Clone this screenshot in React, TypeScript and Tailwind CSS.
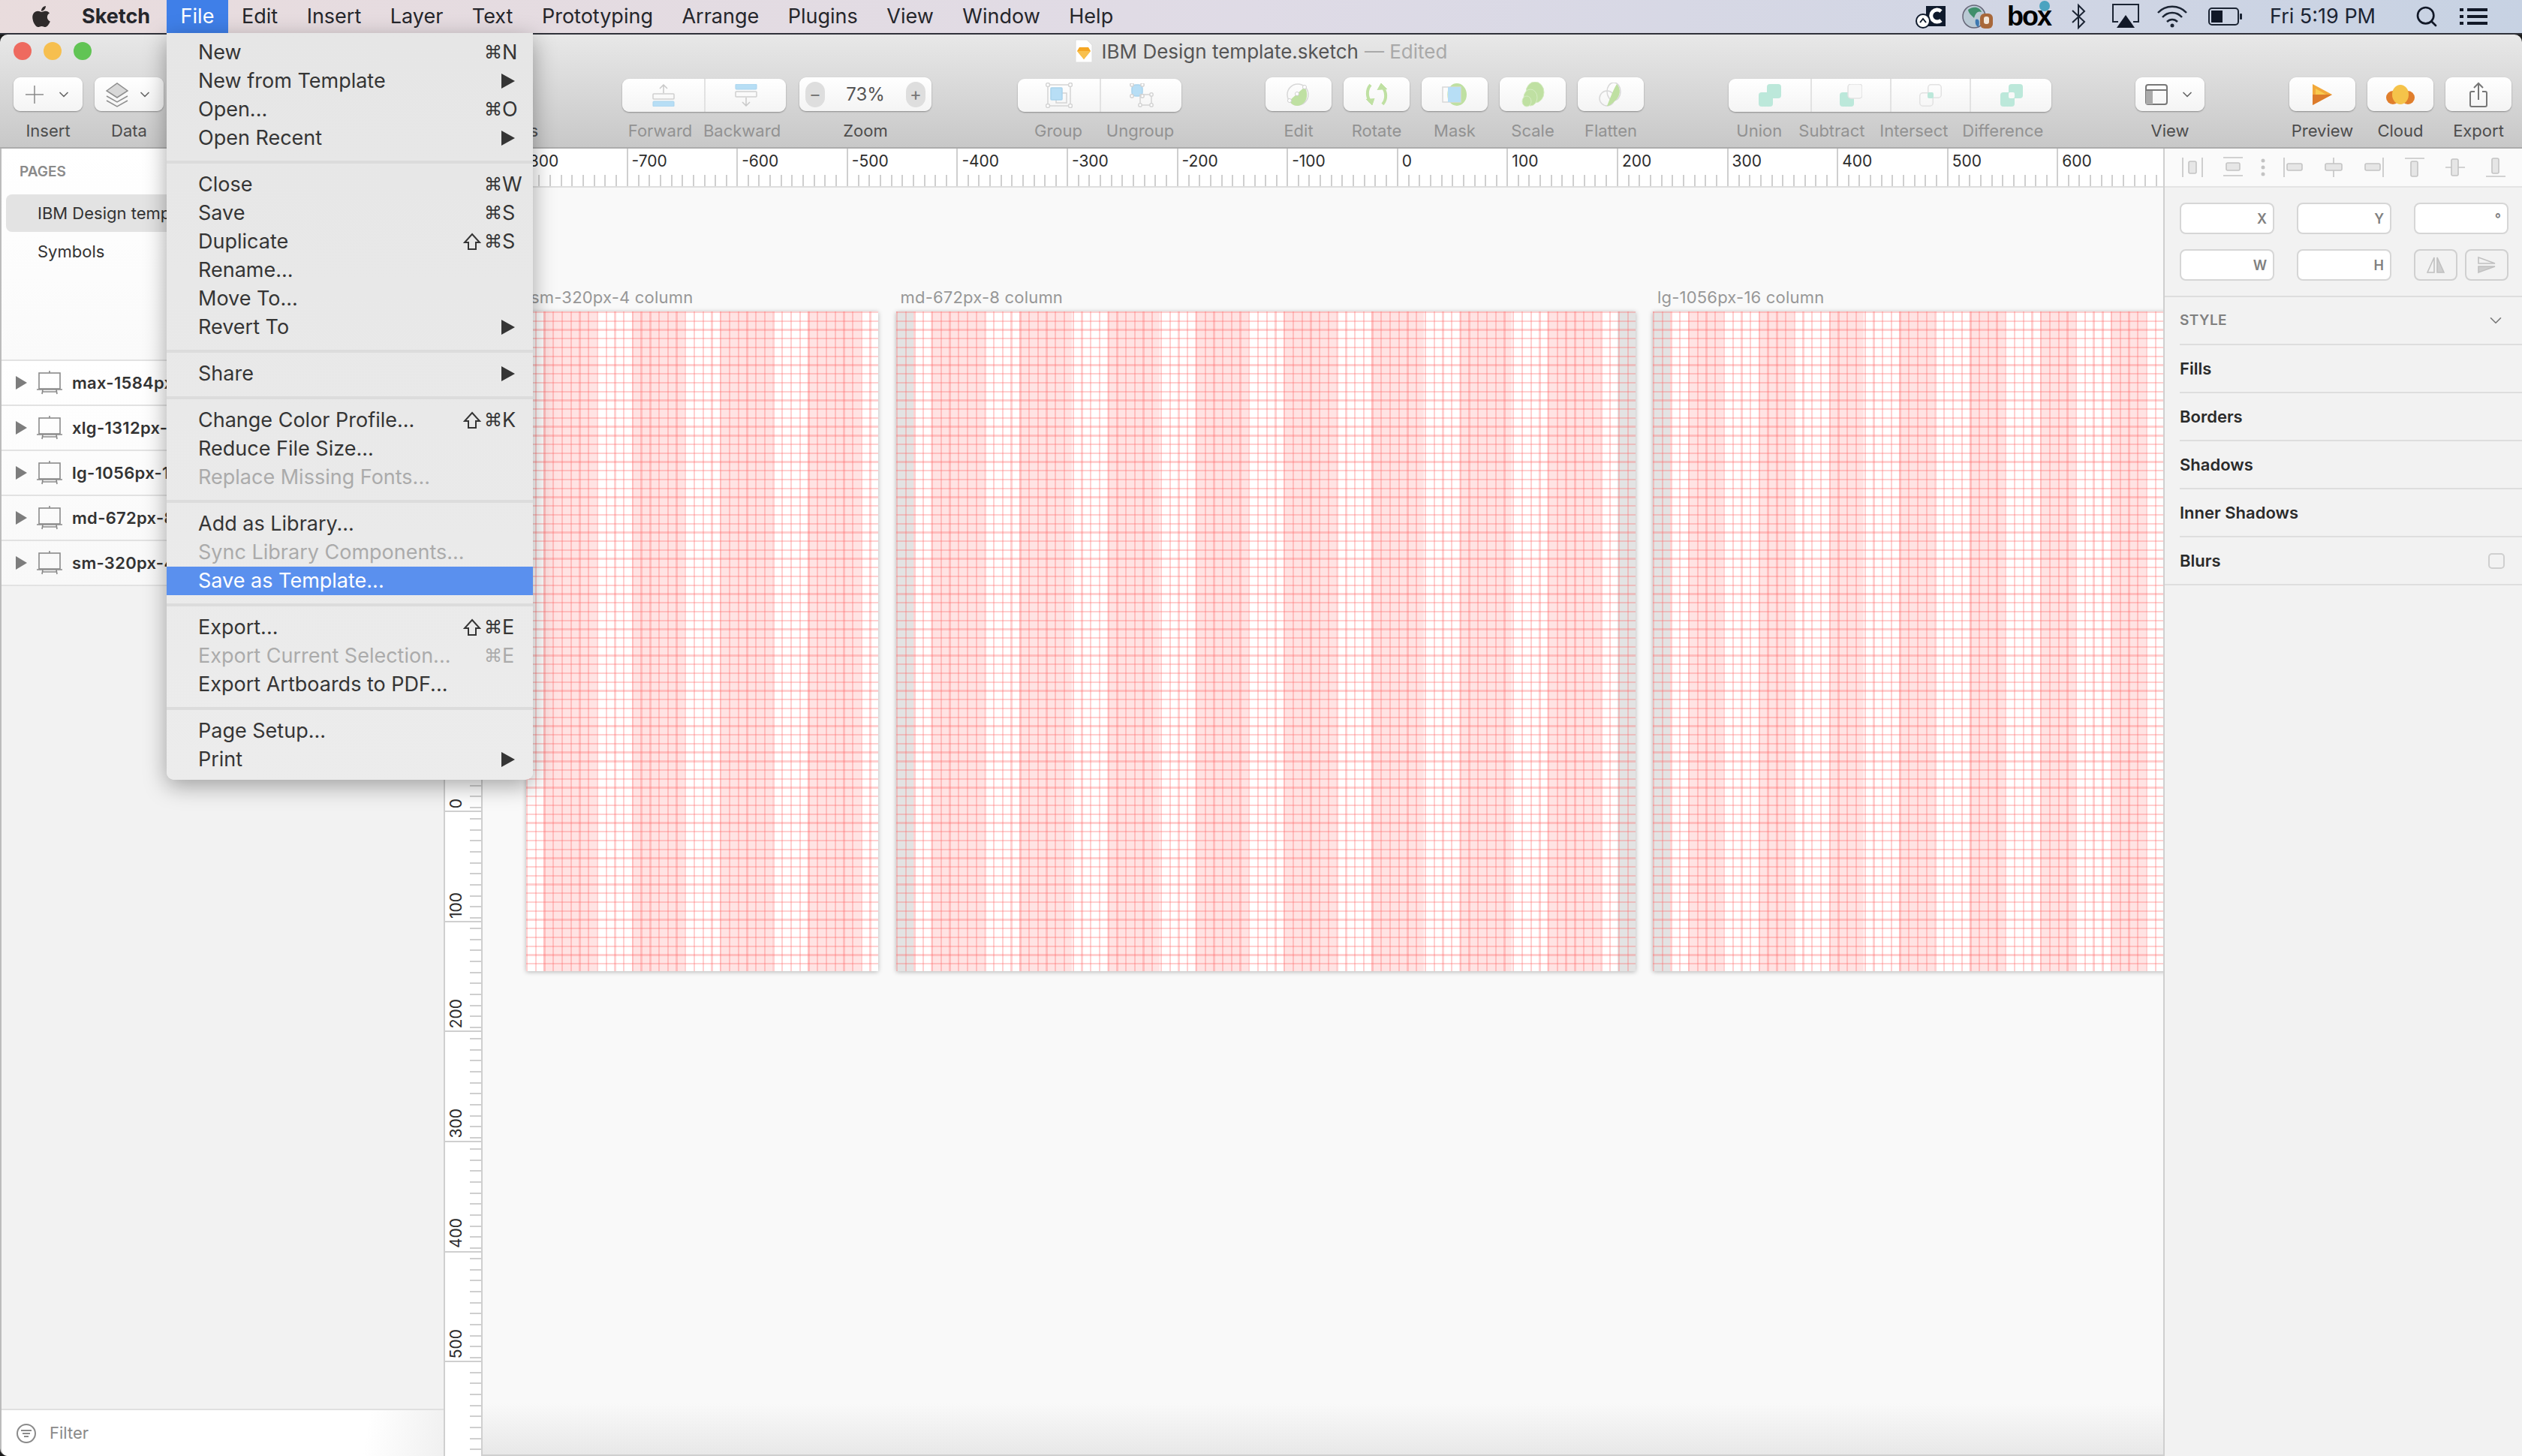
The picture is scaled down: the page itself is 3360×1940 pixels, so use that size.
import { ReactNode } from 'react'
import { FaApple } from 'react-icons/fa'
import { ChevronDown, Search } from 'lucide-react'

type MenuEntry = { label: string; keys?: string; shift?: boolean; arrow?: boolean; disabled?: boolean; active?: boolean }

const fileMenu: MenuEntry[][] = [
  [
    { label: 'New', keys: 'N' },
    { label: 'New from Template', arrow: true },
    { label: 'Open...', keys: 'O' },
    { label: 'Open Recent', arrow: true },
  ],
  [
    { label: 'Close', keys: 'W' },
    { label: 'Save', keys: 'S' },
    { label: 'Duplicate', keys: 'S', shift: true },
    { label: 'Rename...' },
    { label: 'Move To...' },
    { label: 'Revert To', arrow: true },
  ],
  [{ label: 'Share', arrow: true }],
  [
    { label: 'Change Color Profile...', keys: 'K', shift: true },
    { label: 'Reduce File Size...' },
    { label: 'Replace Missing Fonts...', disabled: true },
  ],
  [
    { label: 'Add as Library...' },
    { label: 'Sync Library Components...', disabled: true },
    { label: 'Save as Template...', active: true },
  ],
  [
    { label: 'Export...', keys: 'E', shift: true },
    { label: 'Export Current Selection...', keys: 'E', disabled: true },
    { label: 'Export Artboards to PDF...' },
  ],
  [{ label: 'Page Setup...' }, { label: 'Print', arrow: true }],
]

const menuBarItems = ['Edit', 'Insert', 'Layer', 'Text', 'Prototyping', 'Arrange', 'Plugins', 'View', 'Window', 'Help']
const artboardNames = ['max-1584px-16 column', 'xlg-1312px-16 column', 'lg-1056px-16 column', 'md-672px-8 column', 'sm-320px-4 column']
const rulerX = [-900, -800, -700, -600, -500, -400, -300, -200, -100, 0, 100, 200, 300, 400, 500, 600, 700]
const rulerY = [-500, -400, -300, -200, -100, 0, 100, 200, 300, 400, 500]
const styleRows = ['Fills', 'Borders', 'Shadows', 'Inner Shadows']

function MenuRow({ item }: { item: MenuEntry }) {
  const tone = item.active ? 'bg-[#5a90ee] text-white' : item.disabled ? 'text-[#ababab]' : 'text-[#353535]'
  return (
    <div className={`flex h-[38px] items-center pl-[42px] text-[27px] whitespace-nowrap ${tone}`}>
      <span className="flex-1 overflow-hidden">{item.label}</span>
      {item.shift && (
        <svg width="24" height="24" viewBox="0 0 24 24" fill="none" stroke="currentColor" strokeWidth="2" className="mr-[4px]">
          <path d="M12 2 L22 13 H17 V22 H7 V13 H2Z" />
        </svg>
      )}
      <span className="flex w-[65px] shrink-0 items-center">
        {item.keys && (
          <>
            <span className="font-['DejaVu_Sans'] text-[24px]">⌘</span>
            <span>{item.keys}</span>
          </>
        )}
        {item.arrow && (
          <svg width="18" height="20" viewBox="0 0 18 20" className="ml-[23px]">
            <polygon points="0,0 18,10 0,20" fill="#353535" />
          </svg>
        )}
      </span>
    </div>
  )
}

function FileMenu() {
  return (
    <div className="absolute left-[222px] top-[44px] z-20 w-[488px] rounded-b-[10px] bg-gradient-to-b from-[#e6e6e6] to-[#ececec] pb-[8px] pt-[7px] shadow-[0_8px_30px_rgba(0,0,0,0.35)]">
      {fileMenu.map((group, i) => (
        <div key={i}>
          {i > 0 && <div className="mb-[9px] mt-[11px] h-[4px] bg-[#dcdcdc]" />}
          {group.map((item) => (
            <MenuRow key={item.label} item={item} />
          ))}
        </div>
      ))}
    </div>
  )
}

function StatusIcons() {
  return (
    <div className="flex items-center text-[#111827]">
      <svg width="40" height="34" viewBox="0 0 40 34">
        <rect x="14" y="3" width="26" height="27" fill="#0f1a2c" />
        <path d="M34 10 A8 8 0 1 0 34 22" fill="none" stroke="#fff" strokeWidth="5" />
        <circle cx="10" cy="23" r="9" fill="#fff" stroke="#0f1a2c" strokeWidth="2" />
        <path d="M6 25 L10 20 L14 25" fill="none" stroke="#0f1a2c" strokeWidth="2" />
      </svg>
      <svg width="42" height="36" viewBox="0 0 42 36" className="ml-[22px]">
        <circle cx="16" cy="18" r="15" fill="#b9c9d4" stroke="#667" strokeWidth="1.5" />
        <path d="M8 9 C16 3 24 6 26 12 C20 10 18 14 16 20 C12 16 9 14 8 9Z" fill="#3f8f6b" />
        <path d="M18 22 C22 20 24 24 22 32 C18 31 17 26 18 22Z" fill="#3d78b0" />
        <rect x="24" y="14" width="17" height="20" rx="6" fill="#a8683a" />
        <rect x="29" y="18" width="7" height="10" rx="3" fill="#f2e7da" />
      </svg>
      <span className="relative ml-[18px] w-[57px] font-['Liberation_Sans'] text-[36px] font-bold leading-[36px] tracking-[-2px] text-black">
        box
        <span className="absolute right-0 top-[-3px] h-[14px] w-[14px] rounded-full bg-[#4ba3c0]" />
      </span>
      <svg width="20" height="36" viewBox="0 0 20 36" className="ml-[28px]" fill="none" stroke="#1b2433" strokeWidth="2">
        <path d="M2 10 L18 25 L10 33 V3 L18 11 L2 26" />
      </svg>
      <svg width="36" height="34" viewBox="0 0 36 34" className="ml-[35px]">
        <path d="M8 24 H1 V1 H35 V24 H28" fill="none" stroke="#1b2433" strokeWidth="2" />
        <polygon points="18,15 30,32 6,32" fill="#111827" />
      </svg>
      <svg width="42" height="32" viewBox="0 0 42 32" className="ml-[23px]" fill="none" stroke="#1b2433" strokeWidth="2.5">
        <path d="M2 11 C12 0 30 0 40 11" />
        <path d="M8 17 C15 9 27 9 34 17" />
        <path d="M14 23 C18 19 24 19 28 23" />
        <circle cx="21" cy="28" r="2.5" fill="#1b2433" stroke="none" />
      </svg>
      <svg width="46" height="24" viewBox="0 0 46 24" className="ml-[27px]">
        <rect x="1" y="1" width="39" height="22" rx="4" fill="none" stroke="#1b2433" strokeWidth="2" />
        <rect x="4" y="4" width="15" height="16" fill="#111827" />
        <rect x="42" y="8" width="3" height="8" rx="1" fill="#1b2433" />
      </svg>
      <span className="ml-[36px] w-[143px] whitespace-nowrap text-[27px] text-[#1b2433]">Fri 5:19 PM</span>
      <Search className="ml-[50px]" size={32} strokeWidth={2} />
      <svg width="37" height="24" viewBox="0 0 37 24" className="ml-[28px]" fill="#111827">
        <rect x="0" y="1" width="5" height="4" />
        <rect x="10" y="1" width="27" height="4" />
        <rect x="0" y="10" width="5" height="4" />
        <rect x="10" y="10" width="27" height="4" />
        <rect x="0" y="19" width="5" height="4" />
        <rect x="10" y="19" width="27" height="4" />
      </svg>
    </div>
  )
}

function MenuBar() {
  return (
    <div className="flex h-[46px] shrink-0 items-center justify-between border-b-2 border-[#30323a] bg-gradient-to-r from-[#e9dcdd] via-[#dfdbe6] to-[#c7d2e3] pr-[46px]">
      <div className="flex h-full items-center text-[27px] text-[#25262b]">
        <FaApple size={32} className="ml-[39px] text-[#2f2b2b]" />
        <span className="ml-[38px] w-[113px] font-bold">Sketch</span>
        <span className="flex h-full w-[82px] items-center justify-center bg-[#3f7fe8] text-white">File</span>
        <div className="ml-[18px] flex gap-[38.5px]">
          {menuBarItems.map((name) => (
            <span key={name}>{name}</span>
          ))}
        </div>
      </div>
      <StatusIcons />
    </div>
  )
}

/* toolbar drawings */
const forwardIcon = (
  <svg width="30" height="30" viewBox="0 0 30 30" fill="none">
    <path d="M15 12 V1 M10 6 L15 1 L20 6" stroke="#c9c9c9" strokeWidth="1.5" />
    <rect x="1" y="13" width="28" height="7" rx="1" stroke="#cfcfcf" strokeWidth="1.5" />
    <rect x="1" y="23" width="28" height="7" rx="1" fill="#b7def5" stroke="#a9d3ec" />
  </svg>
)
const backwardIcon = (
  <svg width="30" height="30" viewBox="0 0 30 30" fill="none">
    <rect x="1" y="0" width="28" height="7" rx="1" fill="#b7def5" stroke="#a9d3ec" />
    <rect x="1" y="10" width="28" height="7" rx="1" stroke="#cfcfcf" strokeWidth="1.5" />
    <path d="M15 18 V29 M10 24 L15 29 L20 24" stroke="#c9c9c9" strokeWidth="1.5" />
  </svg>
)
const groupIcon = (
  <svg width="36" height="34" viewBox="0 0 36 34" fill="none" stroke="#d4d4d4" strokeWidth="1.5">
    <rect x="3" y="3" width="30" height="28" />
    <rect x="14" y="14" width="14" height="13" />
    <rect x="7" y="7" width="15" height="16" rx="1" fill="#b7def5" stroke="#a9d3ec" />
    {[[3, 3], [33, 3], [3, 31], [33, 31]].map(([x, y]) => (
      <circle key={`${x}-${y}`} cx={x} cy={y} r="2.5" fill="#fff" />
    ))}
  </svg>
)
const ungroupIcon = (
  <svg width="32" height="32" viewBox="0 0 32 32" fill="none" stroke="#d4d4d4" strokeWidth="1.5">
    <rect x="3" y="2" width="14" height="15" rx="5" fill="#b7def5" stroke="#a9d3ec" />
    <rect x="14" y="15" width="15" height="14" />
    {[[3, 2], [17, 2], [3, 17], [17, 17], [29, 15], [14, 29], [29, 29]].map(([x, y]) => (
      <circle key={`${x}-${y}`} cx={x} cy={y} r="2.2" fill="#fff" />
    ))}
  </svg>
)
const editIcon = (
  <svg width="32" height="32" viewBox="0 0 32 32" fill="none">
    <circle cx="15" cy="16" r="14" stroke="#d8d8d8" strokeWidth="1.5" />
    <path d="M4 24 L24 6 C30 14 28 30 14 31 C9 31 6 28 4 24Z" fill="#bfe0a2" />
    <circle cx="24" cy="6" r="2.5" fill="#fff" stroke="#cfcfcf" />
    <circle cx="4" cy="24" r="2.5" fill="#fff" stroke="#cfcfcf" />
    <circle cx="14" cy="15" r="2.5" fill="#fff" stroke="#cfcfcf" />
  </svg>
)
const rotateIcon = (
  <svg width="32" height="32" viewBox="0 0 32 32" fill="none" stroke="#bfe0a2" strokeWidth="4">
    <path d="M8 3 C2 10 3 20 8 26" />
    <path d="M2 22 L10 30 L13 21" fill="#bfe0a2" strokeWidth="1" />
    <path d="M24 29 C30 22 29 12 24 6" />
    <path d="M17 10 L22 1 L30 9" fill="#bfe0a2" strokeWidth="1" />
  </svg>
)
const maskIcon = (
  <svg width="34" height="32" viewBox="0 0 34 32" fill="none">
    <ellipse cx="20" cy="16" rx="13" ry="15" fill="#bfe0a2" />
    <rect x="1" y="6" width="24" height="20" fill="#fff" fillOpacity="0.4" stroke="#d8d8d8" strokeWidth="1.5" />
    <rect x="8" y="6" width="17" height="20" fill="#b7def5" />
  </svg>
)
const scaleIcon = (
  <svg width="32" height="34" viewBox="0 0 32 34" fill="#bfe0a2" stroke="#d5ebc2" strokeWidth="1">
    <ellipse cx="19" cy="14" rx="12" ry="14" />
    <ellipse cx="13" cy="21" rx="9" ry="11" />
    <ellipse cx="8" cy="26" rx="6" ry="7" />
  </svg>
)
const flattenIcon = (
  <svg width="32" height="32" viewBox="0 0 32 32" fill="none">
    <ellipse cx="20" cy="12" rx="9" ry="12" stroke="#d8d8d8" strokeWidth="1.5" />
    <circle cx="11" cy="21" r="10" stroke="#d8d8d8" strokeWidth="1.5" />
    <path d="M24 2 C30 8 29 18 22 24 C17 29 13 32 11 31 C14 24 18 12 24 2Z" fill="#bfe0a2" />
  </svg>
)
const opsBox = { a: { x: 11, y: 0 }, b: { x: 0, y: 11 } }
const opsFill = '#bce8da'
const unionIcon = (
  <svg width="30" height="30" viewBox="0 0 30 30">
    <rect {...opsBox.a} width="19" height="19" rx="4" fill={opsFill} />
    <rect {...opsBox.b} width="19" height="19" rx="4" fill={opsFill} />
  </svg>
)
const subtractIcon = (
  <svg width="30" height="30" viewBox="0 0 30 30">
    <rect {...opsBox.b} width="19" height="19" rx="4" fill={opsFill} />
    <rect {...opsBox.a} width="19" height="19" rx="4" fill="#f8f8f8" stroke="#e2e2e2" strokeWidth="1.5" />
  </svg>
)
const intersectIcon = (
  <svg width="30" height="30" viewBox="0 0 30 30" fill="none">
    <rect x="11.75" y="0.75" width="17.5" height="17.5" rx="4" stroke="#e2e2e2" strokeWidth="1.5" />
    <rect x="0.75" y="11.75" width="17.5" height="17.5" rx="4" stroke="#e2e2e2" strokeWidth="1.5" />
    <rect x="11" y="11" width="8" height="8" rx="2" fill={opsFill} />
  </svg>
)
const differenceIcon = (
  <svg width="30" height="30" viewBox="0 0 30 30">
    <rect {...opsBox.a} width="19" height="19" rx="4" fill={opsFill} />
    <rect {...opsBox.b} width="19" height="19" rx="4" fill={opsFill} />
    <rect x="11" y="11" width="8" height="8" rx="2" fill="#f8f8f8" />
  </svg>
)
const layersIcon = (
  <svg width="30" height="40" viewBox="0 0 30 40" fill="none" stroke="#8f8f8f" strokeWidth="1.5">
    <path d="M1 22 L15 30 L29 22" />
    <path d="M1 28 L15 36 L29 28" />
    <path d="M1 15 L15 5 L29 15 L15 24Z" fill="#d8d8d8" />
  </svg>
)

function ToolButton({ className, label, disabled, children }: { className: string; label: string; disabled?: boolean; children?: ReactNode }) {
  return (
    <div className={`flex shrink-0 flex-col items-center ${className}`}>
      <div className="flex h-[45px] w-full items-center justify-center rounded-[9px] bg-gradient-to-b from-white to-[#f4f4f4] shadow-[0_1px_2px_rgba(0,0,0,0.35)]">
        {children}
      </div>
      <span className={`mt-[13px] whitespace-nowrap text-[22px] leading-[26px] ${disabled ? 'text-[#929292]' : 'text-[#4d4d4d]'}`}>{label}</span>
    </div>
  )
}

function Segment({ className, children }: { className: string; children: ReactNode }) {
  return <div className={`flex h-full items-center justify-center border-r-2 border-[#e2e2e2] last:border-r-0 ${className}`}>{children}</div>
}

function SegLabel({ className, children }: { className: string; children: string }) {
  return <span className={`whitespace-nowrap text-center text-[22px] leading-[26px] text-[#929292] ${className}`}>{children}</span>
}

function Toolbar() {
  return (
    <div className="h-[152px] shrink-0 border-b-2 border-[#acacac] bg-gradient-to-b from-[#e8e8e8] to-[#c8c8c8]">
      <div className="grid h-[44px] grid-cols-[1fr_auto_1fr] items-center">
        <div className="flex gap-[16px] pl-[18px]">
          <span className="h-[24px] w-[24px] rounded-full bg-[#ee6a5f]" />
          <span className="h-[24px] w-[24px] rounded-full bg-[#f6bf4f]" />
          <span className="h-[24px] w-[24px] rounded-full bg-[#61c454]" />
        </div>
        <div className="flex items-center whitespace-nowrap text-[26px] text-[#555]">
          <svg width="24" height="32" viewBox="0 0 24 32" className="mr-[12px]">
            <path d="M1 1 H16 L23 8 V31 H1Z" fill="#fff" stroke="#ddd" />
            <polygon points="12,11 18,11 21,16 12,27 3,16 6,11" fill="#f5a623" />
            <polygon points="3,16 21,16 12,27" fill="#f8c04e" />
          </svg>
          IBM Design template.sketch
          <span className="ml-[8px] text-[#a9a9a9]">— Edited</span>
        </div>
        <div />
      </div>
      <div className="flex pl-[18px] pt-[13px]">
        <ToolButton className="w-[92px]" label="Insert">
          <svg width="26" height="26" viewBox="0 0 26 26" stroke="#8a8a8a" strokeWidth="1.5" className="mr-[16px]">
            <path d="M13 1 V25 M1 13 H25" />
          </svg>
          <ChevronDown size={20} className="text-[#666]" />
        </ToolButton>
        <ToolButton className="ml-[16px] w-[92px]" label="Data">
          <span className="mr-[12px] flex">{layersIcon}</span>
          <ChevronDown size={20} className="text-[#666]" />
        </ToolButton>
        <ToolButton className="ml-[418px] w-[73px]" label="Symbols" />

        <div className="ml-[120px] w-[218px] shrink-0">
          <div className="mt-[2px] flex h-[44px] rounded-[9px] bg-gradient-to-b from-white to-[#f4f4f4] shadow-[0_1px_2px_rgba(0,0,0,0.35)]">
            <Segment className="w-[111px]">{forwardIcon}</Segment>
            <Segment className="flex-1">{backwardIcon}</Segment>
          </div>
          <div className="mt-[12px] flex">
            <SegLabel className="w-[102px]">Forward</SegLabel>
            <SegLabel className="w-[118px]">Backward</SegLabel>
          </div>
        </div>

        <ToolButton className="ml-[18px] w-[176px]" label="Zoom">
          <div className="flex w-full items-center justify-between px-[8px] text-[24px] text-[#555]">
            <span className="flex h-[34px] w-[26px] items-center justify-center rounded-full bg-[#dedede] text-[#777]">−</span>
            73%
            <span className="flex h-[34px] w-[26px] items-center justify-center rounded-full bg-[#dedede] text-[#777]">+</span>
          </div>
        </ToolButton>

        <div className="ml-[115px] w-[218px] shrink-0">
          <div className="mt-[2px] flex h-[44px] rounded-[9px] bg-gradient-to-b from-white to-[#f4f4f4] shadow-[0_1px_2px_rgba(0,0,0,0.35)]">
            <Segment className="w-[111px]">{groupIcon}</Segment>
            <Segment className="flex-1">{ungroupIcon}</Segment>
          </div>
          <div className="mt-[12px] flex">
            <SegLabel className="w-[108px]">Group</SegLabel>
            <SegLabel className="w-[110px]">Ungroup</SegLabel>
          </div>
        </div>

        <ToolButton className="ml-[112px] w-[88px]" label="Edit" disabled>{editIcon}</ToolButton>
        <ToolButton className="ml-[16px] w-[88px]" label="Rotate" disabled>{rotateIcon}</ToolButton>
        <ToolButton className="ml-[16px] w-[88px]" label="Mask" disabled>{maskIcon}</ToolButton>
        <ToolButton className="ml-[16px] w-[88px]" label="Scale" disabled>{scaleIcon}</ToolButton>
        <ToolButton className="ml-[16px] w-[88px]" label="Flatten" disabled>{flattenIcon}</ToolButton>

        <div className="ml-[113px] w-[430px] shrink-0">
          <div className="mt-[2px] flex h-[44px] rounded-[9px] bg-gradient-to-b from-white to-[#f4f4f4] shadow-[0_1px_2px_rgba(0,0,0,0.35)]">
            <Segment className="w-[111px]">{unionIcon}</Segment>
            <Segment className="w-[106px]">{subtractIcon}</Segment>
            <Segment className="w-[106px]">{intersectIcon}</Segment>
            <Segment className="flex-1">{differenceIcon}</Segment>
          </div>
          <div className="mt-[12px] flex">
            <SegLabel className="w-[82px]">Union</SegLabel>
            <SegLabel className="w-[112px]">Subtract</SegLabel>
            <SegLabel className="w-[108px]">Intersect</SegLabel>
            <SegLabel className="w-[130px]">Difference</SegLabel>
          </div>
        </div>

        <ToolButton className="ml-[112px] w-[92px]" label="View">
          <svg width="30" height="30" viewBox="0 0 30 30" fill="none" stroke="#777" strokeWidth="2" className="mr-[16px]">
            <rect x="1" y="2" width="28" height="26" rx="3" />
            <rect x="1" y="9" width="9" height="19" fill="#aaa" stroke="none" />
            <path d="M1 9 H29" />
          </svg>
          <ChevronDown size={20} className="text-[#666]" />
        </ToolButton>
        <ToolButton className="ml-[113px] w-[88px]" label="Preview">
          <svg width="26" height="28" viewBox="0 0 26 28">
            <polygon points="0,0 26,14 0,28" fill="#f2a93b" />
            <polygon points="0,14 26,14 0,28" fill="#dc7b2b" />
            <polygon points="4,6 18,14 4,14" fill="#f8ca4f" />
          </svg>
        </ToolButton>
        <ToolButton className="ml-[16px] w-[88px]" label="Cloud">
          <svg width="38" height="26" viewBox="0 0 38 26">
            <circle cx="9" cy="17" r="9" fill="#e07e2c" />
            <circle cx="29" cy="17" r="9" fill="#e07e2c" />
            <ellipse cx="19" cy="13" rx="11" ry="13" fill="#f5c34a" />
          </svg>
        </ToolButton>
        <ToolButton className="ml-[16px] w-[88px]" label="Export">
          <svg width="24" height="34" viewBox="0 0 24 34" fill="none" stroke="#777" strokeWidth="2">
            <path d="M7 13 H3 Q1 13 1 15 V31 Q1 33 3 33 H21 Q23 33 23 31 V15 Q23 13 21 13 H17" />
            <path d="M12 24 V2 M6 8 L12 2 L18 8" />
          </svg>
        </ToolButton>
      </div>
    </div>
  )
}

function LayerRow({ name }: { name: string }) {
  return (
    <div className="flex h-[60px] items-center border-b-2 border-[#e2e2e2] pl-[19px] text-[22px] font-semibold tracking-[0.3px] whitespace-nowrap text-[#333]">
      <svg width="15" height="18" viewBox="0 0 15 18">
        <polygon points="0,0 15,9 0,18" fill="#7d7d7d" />
      </svg>
      <svg width="34" height="32" viewBox="0 0 34 32" fill="none" stroke="#8a8a8a" strokeWidth="1.6" className="ml-[13px]">
        <rect x="3" y="3" width="28" height="21" />
        <path d="M0 25 H34 M17 0 V3 M8 25 L7 31 M26 25 L27 31 M7 28 H27" />
      </svg>
      <span className="ml-[13px]">{name}</span>
    </div>
  )
}

function Sidebar() {
  return (
    <div className="flex w-[591px] shrink-0 flex-col overflow-hidden rounded-bl-[10px] border-l-2 border-[#bcbcbc] bg-[#f2f2f2]">
      <div className="h-[283px] shrink-0 border-b-2 border-[#e2e2e2] bg-gradient-to-b from-white to-[#fafafa]">
        <div className="pl-[24px] pt-[17px] text-[19px] font-semibold leading-[28px] text-[#8a8a8a]">PAGES</div>
        <div className="ml-[6px] mt-[16px] flex h-[50px] items-center rounded-[8px] bg-[#e3e3e3] pl-[42px] text-[22px] text-[#333]">IBM Design template</div>
        <div className="pl-[48px] pt-[1px] text-[22px] leading-[50px] text-[#333]">Symbols</div>
      </div>
      <div className="bg-gradient-to-b from-white to-[#f8f8f8]">
        {artboardNames.map((name) => (
          <LayerRow key={name} name={name} />
        ))}
      </div>
      <div className="flex-1" />
      <div className="flex h-[63px] shrink-0 items-center border-t-2 border-[#e0e0e0] bg-[linear-gradient(100deg,#ffffff_82%,#f0f0f0)] pl-[20px] text-[22px] text-[#8a8a8a]">
        <svg width="26" height="26" viewBox="0 0 26 26" fill="none" stroke="#8a8a8a" strokeWidth="2">
          <circle cx="13" cy="13" r="12" />
          <path d="M6 9 H20 M8 13 H18 M10 17 H16" />
        </svg>
        <span className="ml-[18px]">Filter</span>
      </div>
    </div>
  )
}

function HorizontalRuler() {
  return (
    <div className="h-[52px] shrink-0 overflow-hidden border-b-2 border-[#dedede] bg-white pl-[52px]">
      <div className="h-full overflow-hidden">
        <div className="ml-[-101.6px] flex h-full w-max">
          {rulerX.map((v) => (
            <div key={v} className="flex h-full w-[146.6px] shrink-0 flex-col border-l-2 border-[#cfcfcf]">
              <span className="flex-1 pl-[5px] pt-[3px] text-[21px] leading-[28px] text-[#2c2c2c]">{v}</span>
              <div className="ml-[-2px] h-[15px] bg-[repeating-linear-gradient(90deg,#cfcfcf_0,#cfcfcf_2px,transparent_2px,transparent_14.66px)]" />
            </div>
          ))}
        </div>
      </div>
    </div>
  )
}

function VerticalRuler() {
  return (
    <div className="w-[52px] shrink-0 overflow-hidden border-x-2 border-[#cfcfcf] bg-white">
      <div className="mt-[-47.4px] flex flex-col">
        {rulerY.map((v) => (
          <div key={v} className="flex h-[146.6px] shrink-0 items-end border-b-2 border-[#cfcfcf] pb-[3px] pl-[3px]">
            <span className="rotate-180 text-[21px] leading-[24px] text-[#2c2c2c] [writing-mode:vertical-rl]">{v}</span>
            <div className="ml-auto h-full w-[15px] bg-[repeating-linear-gradient(0deg,#cfcfcf_0,#cfcfcf_2px,transparent_2px,transparent_14.66px)]" />
          </div>
        ))}
        <div className="flex h-[146.6px] shrink-0 justify-end">
          <div className="h-full w-[15px] bg-[repeating-linear-gradient(180deg,transparent_0,transparent_12.66px,#cfcfcf_12.66px,#cfcfcf_14.66px)]" />
        </div>
      </div>
    </div>
  )
}

function GridLines() {
  return (
    <div className="absolute inset-0 bg-[repeating-linear-gradient(180deg,rgba(255,100,100,0.3)_0,rgba(255,100,100,0.3)_2.3px,transparent_2.3px,transparent_11.73px),repeating-linear-gradient(90deg,rgba(255,100,100,0.3)_0,rgba(255,100,100,0.3)_2.3px,transparent_2.3px,transparent_11.73px)]" />
  )
}

function Canvas() {
  return (
    <div className="relative flex-1 overflow-hidden bg-[#f9f9f9]">
      <div className="flex gap-[23.5px] pl-[58px] pt-[133px]">
        <div className="w-[469px] shrink-0">
          <div className="h-[32px] pl-[6px] text-[22px] leading-[26px] tracking-[0.2px] whitespace-nowrap text-[#979797]">sm-320px-4 column</div>
          <div className="relative flex h-[879px] gap-[46.92px] bg-white pl-[23.46px] shadow-[0_1px_6px_rgba(0,0,0,0.28)]">
            {[0, 1, 2, 3].map((i) => (
              <div key={i} className="w-[70.38px] bg-[#ffe3e3]" />
            ))}
            <GridLines />
          </div>
        </div>
        <div className="w-[985px] shrink-0">
          <div className="h-[32px] pl-[6px] text-[22px] leading-[26px] tracking-[0.2px] whitespace-nowrap text-[#979797]">md-672px-8 column</div>
          <div className="relative flex h-[879px] bg-white shadow-[0_1px_6px_rgba(0,0,0,0.28)]">
            <div className="w-[23.46px] bg-[#e3e3e3]" />
            <div className="ml-[23.46px] flex gap-[46.92px]">
              {[0, 1, 2, 3, 4, 5, 6, 7].map((i) => (
                <div key={i} className="w-[70.38px] bg-[#ffe3e3]" />
              ))}
            </div>
            <div className="ml-auto w-[23.46px] bg-[#e3e3e3]" />
            <GridLines />
          </div>
        </div>
        <div className="w-[1548px] shrink-0">
          <div className="h-[32px] pl-[6px] text-[22px] leading-[26px] tracking-[0.2px] whitespace-nowrap text-[#979797]">lg-1056px-16 column</div>
          <div className="relative flex h-[879px] bg-white shadow-[0_1px_6px_rgba(0,0,0,0.28)]">
            <div className="w-[23.46px] bg-[#e3e3e3]" />
            <div className="ml-[23.46px] flex gap-[46.92px]">
              {[0, 1, 2, 3, 4, 5, 6, 7, 8, 9, 10, 11, 12, 13, 14, 15].map((i) => (
                <div key={i} className="w-[46.92px] bg-[#ffe3e3]" />
              ))}
            </div>
            <GridLines />
          </div>
        </div>
      </div>
      <div className="absolute inset-x-0 bottom-0 h-[70px] border-b-2 border-[#cfcfcf] bg-gradient-to-t from-[#e8e8e8] to-transparent" />
    </div>
  )
}

function AlignIcon({ children }: { children: ReactNode }) {
  return (
    <svg width="28" height="28" viewBox="0 0 28 28" fill="#e6e6e6" stroke="#c4c4c4" strokeWidth="1.6">
      {children}
    </svg>
  )
}

function Field({ letter }: { letter: string }) {
  return (
    <div className="flex h-[42px] w-[126px] items-center justify-end rounded-[8px] border-2 border-[#d6d6d6] bg-white pr-[8px] text-[18px] font-semibold text-[#808080]">
      {letter}
    </div>
  )
}

function RightPanel() {
  return (
    <div className="flex w-[478px] shrink-0 flex-col border-l-2 border-[#cfcfcf] bg-[#f2f2f2]">
      <div className="flex h-[52px] shrink-0 items-center gap-[26px] border-b-2 border-[#e4e4e4] bg-[#fafafa] pl-[23px]">
        <AlignIcon>
          <path d="M1 1 V27 M27 1 V27" />
          <rect x="9" y="6" width="10" height="16" rx="2" />
        </AlignIcon>
        <AlignIcon>
          <path d="M1 1 H27 M1 25 H27" />
          <rect x="5" y="8" width="18" height="10" rx="2" />
        </AlignIcon>
        <svg width="6" height="24" viewBox="0 0 6 24" fill="#c4c4c4" className="mx-[-3px]">
          <circle cx="3" cy="3" r="2.5" />
          <circle cx="3" cy="12" r="2.5" />
          <circle cx="3" cy="21" r="2.5" />
        </svg>
        <AlignIcon>
          <path d="M2 1 V27" />
          <rect x="6" y="9" width="20" height="9" rx="2" />
        </AlignIcon>
        <AlignIcon>
          <path d="M14 1 V27" />
          <rect x="3" y="9" width="22" height="9" rx="2" />
        </AlignIcon>
        <AlignIcon>
          <path d="M26 1 V27" />
          <rect x="2" y="9" width="20" height="9" rx="2" />
        </AlignIcon>
        <AlignIcon>
          <path d="M1 2 H27" />
          <rect x="9" y="6" width="9" height="20" rx="2" />
        </AlignIcon>
        <AlignIcon>
          <path d="M1 14 H27" />
          <rect x="9" y="3" width="9" height="22" rx="2" />
        </AlignIcon>
        <AlignIcon>
          <path d="M1 26 H27" />
          <rect x="9" y="2" width="9" height="20" rx="2" />
        </AlignIcon>
      </div>
      <div className="border-b-2 border-[#dedede] pb-[20px] pl-[20px] pr-[18px] pt-[20px]">
        <div className="flex justify-between">
          <Field letter="X" />
          <Field letter="Y" />
          <Field letter="°" />
        </div>
        <div className="mt-[20px] flex justify-between">
          <Field letter="W" />
          <Field letter="H" />
          <div className="flex w-[126px] justify-between">
            <div className="flex h-[42px] w-[58px] items-center justify-center rounded-[8px] border-2 border-[#d0d0d0]">
              <svg width="24" height="24" viewBox="0 0 24 24" fill="none" stroke="#c0c0c0" strokeWidth="1.6">
                <path d="M10 2 V22 H1Z" />
                <path d="M14 2 V22 H23Z" fill="#cfcfcf" />
              </svg>
            </div>
            <div className="flex h-[42px] w-[58px] items-center justify-center rounded-[8px] border-2 border-[#d0d0d0]">
              <svg width="24" height="24" viewBox="0 0 24 24" fill="none" stroke="#c0c0c0" strokeWidth="1.6">
                <path d="M1 2 L23 10 H1Z" />
                <path d="M1 14 H23 L1 22Z" fill="#cfcfcf" />
              </svg>
            </div>
          </div>
        </div>
      </div>
      <div className="ml-[20px] flex h-[64px] items-center justify-between border-b-2 border-[#dedede] pr-[22px] text-[19px] font-semibold tracking-[0.4px] text-[#808080]">
        STYLE
        <ChevronDown size={26} strokeWidth={1.5} className="text-[#777]" />
      </div>
      {styleRows.map((name) => (
        <div key={name} className="ml-[20px] flex h-[64px] items-center border-b-2 border-[#dedede] text-[22px] font-semibold text-[#2a2a2a]">
          {name}
        </div>
      ))}
      <div className="flex h-[64px] items-center justify-between border-b-2 border-[#dedede] pl-[20px] pr-[23px] text-[22px] font-semibold text-[#2a2a2a]">
        Blurs
        <span className="h-[21px] w-[22px] rounded-[5px] border-2 border-[#cfcfcf]" />
      </div>
    </div>
  )
}

export default function App() {
  return (
    <div className="relative flex h-[1940px] w-[3360px] flex-col overflow-hidden bg-[#1a1a1a] font-['Inter','DejaVu_Sans',sans-serif]">
      <MenuBar />
      <div className="flex min-h-0 flex-1 flex-col overflow-hidden rounded-t-[10px]">
        <Toolbar />
        <div className="flex min-h-0 flex-1">
          <Sidebar />
          <div className="flex min-w-0 flex-1 flex-col">
            <HorizontalRuler />
            <div className="flex min-h-0 flex-1">
              <VerticalRuler />
              <Canvas />
            </div>
          </div>
          <RightPanel />
        </div>
      </div>
      <FileMenu />
    </div>
  )
}
